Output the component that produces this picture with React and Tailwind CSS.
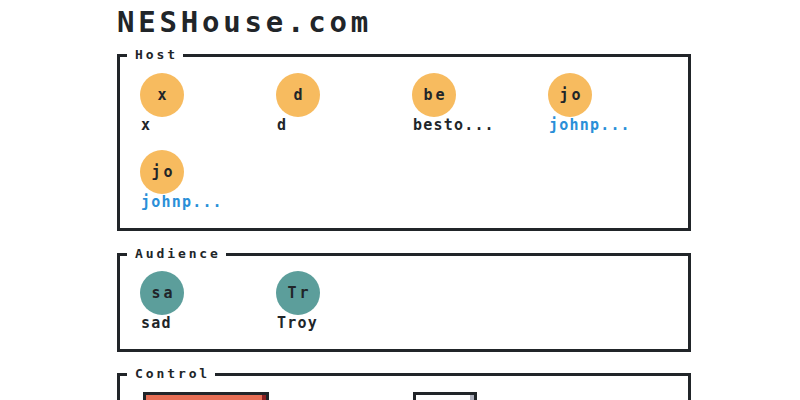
import React from "react";

const font = { fontFamily: '"DejaVu Sans Mono", "Liberation Mono", monospace' };

const hosts = [
  { initials: "x", name: "x" },
  { initials: "d", name: "d" },
  { initials: "be", name: "besto..." },
  { initials: "jo", name: "johnp...", link: true },
  { initials: "jo", name: "johnp...", link: true },
];

const audience = [
  { initials: "sa", name: "sad" },
  { initials: "Tr", name: "Troy" },
];

const Member = ({ item, color }) => (
  <div className="w-[136px] flex flex-col items-start">
    <div
      className={`w-[44px] h-[44px] rounded-full flex items-center justify-center text-[15px] font-bold tracking-[3px] pl-[3px] text-[#212529] ${color}`}
    >
      {item.initials}
    </div>
    <span
      className={`text-[15px] font-bold leading-[16px] tracking-[1.2px] pl-[1px] ${
        item.link ? "text-[#2a8fd8]" : "text-[#212529]"
      }`}
    >
      {item.name}
    </span>
  </div>
);

const Box = ({ title, children, className = "" }) => (
  <fieldset className={`border-[3px] border-[#212529] ${className}`}>
    <legend className="ml-[7px] pl-[8px] pr-[5px] text-[13px] font-bold leading-[16px] tracking-[2.9px] text-[#212529] bg-white">
      {title}
    </legend>
    <div className="pl-[20px]">{children}</div>
  </fieldset>
);

const App = () => {
  return (
    <div className="w-[800px] h-[400px] overflow-hidden bg-white text-[#212529]" style={font}>
      <div className="ml-[117px] w-[574px] pt-[8px]">
        <h1 className="text-[29px] font-bold leading-none tracking-[3.8px]">NESHouse.com</h1>

        <Box title="Host" className="mt-[10px] pt-[10px] pb-[18px]">
          <div className="flex flex-wrap gap-y-[17px]">
            {hosts.map((h, i) => (
              <Member key={i} item={h} color="bg-[#f7bb5f]" />
            ))}
          </div>
        </Box>

        <Box title="Audience" className="mt-[15px] pt-[9px] pb-[18px]">
          <div className="flex flex-wrap gap-y-[17px]">
            {audience.map((a, i) => (
              <Member key={i} item={a} color="bg-[#5c9e9b]" />
            ))}
          </div>
        </Box>

        <Box title="Control" className="mt-[14px] pt-[10px] pb-[18px]">
          <div className="flex items-start pl-[3px]">
            <button
              aria-label="Leave"
              className="w-[126px] h-[44px] bg-[#e76e55] border-[3px] border-[#212529] shadow-[inset_-4px_-4px_0_#8c2022]"
            />
            <button
              aria-label="Start"
              className="ml-[144px] w-[64px] h-[44px] bg-white border-[3px] border-[#212529] shadow-[inset_-4px_-4px_0_#adafbc]"
            />
          </div>
        </Box>
      </div>
    </div>
  );
};

export default App;
